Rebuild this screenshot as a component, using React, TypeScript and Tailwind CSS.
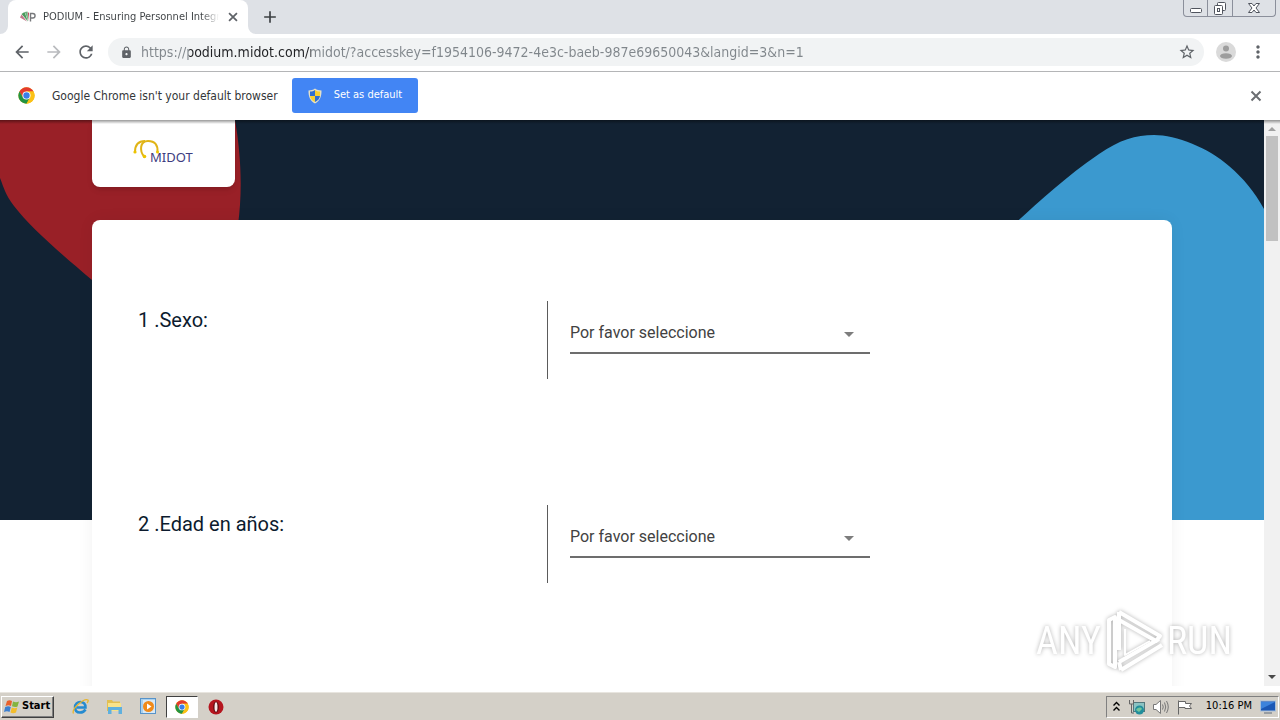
import type { ReactNode } from "react";
import {
  MdAdd,
  MdArrowBack,
  MdArrowForward,
  MdClose,
  MdLock,
  MdMoreVert,
  MdRefresh,
  MdStarBorder,
} from "react-icons/md";

type Question = { id: string; number: number; text: string };

const QUESTIONS: Question[] = [
  { id: "sexo", number: 1, text: "Sexo:" },
  { id: "edad", number: 2, text: "Edad en años:" },
];

const PAGE_URL =
  "https://podium.midot.com/midot/?accesskey=f1954106-9472-4e3c-baeb-987e69650043&langid=3&n=1";

function ChromeLogo({ size }: { size: number }) {
  return (
    <svg width={size} height={size} viewBox="0 0 48 48" aria-hidden="true">
      <circle cx="24" cy="24" r="23" fill="#fbc116" />
      <path d="M4.1 12.5A23 23 0 0 1 43.9 12.5L24 12.5L14 30Z" fill="#e33b2e" />
      <path d="M4.1 12.5A23 23 0 0 0 24 47L34 29.8L14 29.8Z" fill="#229342" />
      <path d="M43.9 12.5A23 23 0 0 1 24 47L34 29.8L24 12.5Z" fill="#fbc116" />
      <circle cx="24" cy="24" r="11.5" fill="#fff" />
      <circle cx="24" cy="24" r="9" fill="#3a7ee8" />
    </svg>
  );
}

function PodiumFavicon() {
  return (
    <svg width="16" height="16" viewBox="0 0 16 16" aria-hidden="true" className="shrink-0">
      <path d="M1.500 5L4.500 3L8 12.500Z" fill="#4a9a5c" />
      <path d="M4.800 3L7.500 2.5L8.200 12Z" fill="#6bb07c" />
      <path d="M0 8.500L1.500 5.500L7 12.500Z" fill="#c2778a" />
      <path d="M7.800 3L9 4L8.500 12Z" fill="#c0455a" />
      <path d="M10.5 12.500V4.5H12.800A2.2 2.2 0 0 1 12.800 9H10.5" fill="none" stroke="#77797c" strokeWidth="1.4" />
    </svg>
  );
}

function ShieldIcon() {
  return (
    <svg width="14" height="16" viewBox="0 0 14 16" aria-hidden="true">
      <path d="M7 0.5C9 2 11 2.4 13.5 2.4C13.7 8 12 13 7 15.5C2 13 0.3 8 0.5 2.4C3 2.4 5 2 7 0.5Z" fill="#e3e0c8" />
      <path d="M7 2C5.500 3 4 3.500 2 3.500V8H7Z" fill="#2f6fd0" />
      <path d="M7 2C8.500 3 10 3.500 12 3.500V8H7Z" fill="#f7d030" />
      <path d="M2 8H7V14C4 12.500 2.300 10.500 2 8Z" fill="#f7d030" />
      <path d="M12 8H7V14C10 12.500 11.700 10.500 12 8Z" fill="#2f6fd0" />
    </svg>
  );
}

function CrossIcon({ size }: { size: number }) {
  return (
    <svg width={size} height={size} viewBox="0 0 16 16" stroke="currentColor" strokeWidth="2" aria-hidden="true">
      <path d="M3.500 3.500L12.500 12.500M12.500 3.500L3.500 12.500" />
    </svg>
  );
}

function TabStrip() {
  return (
    <div className="flex h-[34px] shrink-0 items-stretch justify-between bg-[#dee1e6]">
      <div className="flex items-center">
        <svg width="8" height="34" aria-hidden="true">
          <path d="M0 34A8 8 0 0 0 8 26V34Z" fill="#fff" />
        </svg>
        <div className="flex h-full w-60 items-center gap-[7px] rounded-t-lg bg-white pr-2 pl-3">
          <PodiumFavicon />
          <span className="h-5 w-44 overflow-hidden bg-linear-to-r from-[#3c4043] from-90% to-transparent bg-clip-text text-[11px] leading-5 whitespace-nowrap text-transparent">
            PODIUM - Ensuring Personnel Integrity
          </span>
          <button type="button" aria-label="Close tab" className="text-[#5f6368]">
            <CrossIcon size={14} />
          </button>
        </div>
        <svg width="8" height="34" aria-hidden="true">
          <path d="M8 34A8 8 0 0 1 0 26V34Z" fill="#fff" />
        </svg>
        <button type="button" aria-label="New tab" className="ml-1 text-[#3c4043]">
          <MdAdd size={20} />
        </button>
      </div>
      <div className="mr-1 flex h-[17px] divide-x divide-[#8b8f9b] overflow-hidden rounded-b border border-t-0 border-[#8b8f9b] text-[#50545e]">
        <button type="button" aria-label="Minimize" className="flex w-6 items-center justify-center">
          <svg width="12" height="17" viewBox="0 0 12 17" fill="none" stroke="currentColor">
            <rect x="0.5" y="8.500" width="11" height="4" rx="1" fill="#fff" />
          </svg>
        </button>
        <button type="button" aria-label="Restore" className="flex w-[25px] items-center justify-center">
          <svg width="14" height="17" viewBox="0 0 14 17" fill="none" stroke="currentColor">
            <rect x="4.500" y="2.500" width="8" height="8" rx="1" fill="#fff" />
            <rect x="1.500" y="5.500" width="8" height="9" rx="1" fill="#fff" />
            <rect x="4.500" y="8.500" width="2" height="3" />
          </svg>
        </button>
        <button type="button" aria-label="Close" className="flex w-[42px] items-center justify-center">
          <svg width="12" height="17" viewBox="0 0 12 17" fill="#fff" stroke="currentColor">
            <path d="M0.500 3.500H4L6 6L8 3.500H11.500L8 8L11.500 12.500H8L6 10L4 12.500H0.500L4 8Z" />
          </svg>
        </button>
      </div>
    </div>
  );
}

function Toolbar() {
  return (
    <div className="flex h-[38px] shrink-0 items-center border-b border-[#b4b5b7] bg-white px-3 pb-px text-[#5f6368]">
      <div className="flex items-center gap-3">
        <button type="button" aria-label="Back">
          <MdArrowBack size={20} />
        </button>
        <button type="button" aria-label="Forward" className="text-[#b9bbbe]">
          <MdArrowForward size={20} />
        </button>
        <button type="button" aria-label="Reload">
          <MdRefresh size={20} />
        </button>
      </div>
      <div className="ml-3 flex h-7 min-w-0 flex-1 items-center rounded-full bg-[#f1f3f4] pr-2 pl-3">
        <MdLock size={13} className="shrink-0" />
        {/* scheme and path are grey, the host is dark */}
        <input
          type="text"
          aria-label="Address"
          defaultValue={PAGE_URL}
          className="ml-2 h-6 min-w-0 flex-1 bg-[linear-gradient(to_right,#80868b_48px,#202124_48px,#202124_170px,#80868b_170px)] bg-clip-text text-[14px] text-transparent outline-none"
        />
        <button type="button" aria-label="Bookmark this page">
          <MdStarBorder size={18} />
        </button>
      </div>
      <button type="button" aria-label="Profile" className="ml-3">
        <svg width="20" height="20" viewBox="0 0 20 20">
          <circle cx="10" cy="10" r="10" fill="#dadada" />
          <circle cx="10" cy="6.500" r="3" fill="#9d9d9d" />
          <ellipse cx="10" cy="14" rx="6" ry="2.800" fill="#9d9d9d" />
        </svg>
      </button>
      <button type="button" aria-label="Menu" className="ml-3">
        <MdMoreVert size={20} />
      </button>
    </div>
  );
}

function InfoBar() {
  return (
    <div className="flex h-12 shrink-0 items-center bg-white px-4 pb-px text-[12px]">
      <div className="flex w-5 justify-center">
        <ChromeLogo size={17} />
      </div>
      <p className="ml-4 text-[#333638]">Google Chrome isn&apos;t your default browser</p>
      <button
        type="button"
        className="ml-3.5 flex h-[35px] items-center gap-3 rounded-[3px] bg-[#4285f4] px-4 text-[11px] text-white"
      >
        <ShieldIcon />
        Set as default
      </button>
      <button type="button" aria-label="Dismiss" className="ml-auto text-[#6b6e72]">
        <CrossIcon size={16} />
      </button>
    </div>
  );
}

function HeroBackground() {
  return (
    <div className="flex h-[400px] justify-between overflow-hidden bg-[#122233] [grid-area:1/1]">
      <svg width="242" height="400" viewBox="0 0 242 400" aria-hidden="true">
        <path
          d="M0 0H235C242 40 242 75 238 105C230 150 170 190 130 190C110 190 98 165 92 160C60 133 30 107 14 86C5 74 4 68 0 58Z"
          fill="#992027"
        />
      </svg>
      <svg width="300" height="400" viewBox="0 0 300 400" aria-hidden="true">
        <path
          d="M48 106C75 82 100 58 135 34C155 20 172 15 190 15C212 15 245 28 265 46C280 59 290 71 300 89V400H120C60 300 20 160 48 106Z"
          fill="#3b99cf"
        />
      </svg>
    </div>
  );
}

function MidotLogo() {
  return (
    <svg width="62" height="28" viewBox="0 0 62 28" role="img" aria-label="Midot">
      <path d="M2 12C2 4 6 1 12 1" fill="none" stroke="#e0b416" strokeWidth="2" />
      <path d="M11.500 17C6 11 7 1 15 1C22 1 25 5 24.500 12" fill="none" stroke="#e0b416" strokeWidth="2" />
      <circle cx="2" cy="12" r="1.600" fill="#edc400" />
      <circle cx="11.500" cy="16.500" r="1.800" fill="#edc400" />
      <circle cx="24.500" cy="12" r="1.500" fill="#edc400" />
      <text x="17" y="22" fontSize="13" fontFamily="Noto Sans, sans-serif" fill="#3d3d80">
        MIDOT
      </text>
    </svg>
  );
}

function QuestionRow({ question }: { question: Question }) {
  return (
    <div className="flex">
      <label
        htmlFor={question.id}
        className="w-[455px] pt-[7px] pl-[46px] text-[20px] leading-6 text-[#0c1b2e]"
      >
        {question.number} .{question.text}
      </label>
      <div className="flex h-[78px] flex-1 items-start border-l border-[#5b5b5b] pt-3 pl-[22px]">
        <div className="grid w-[300px] items-center border-b-2 border-[#6d6d6d]">
          <select
            id={question.id}
            className="h-[39px] w-full appearance-none bg-transparent text-[16px] text-[#424242] outline-none [grid-area:1/1]"
          >
            <option>Por favor seleccione</option>
          </select>
          <svg
            width="10"
            height="5"
            viewBox="0 0 10 5"
            aria-hidden="true"
            className="pointer-events-none mt-1 mr-4 justify-self-end [grid-area:1/1]"
          >
            <path d="M0 0H10L5 5Z" fill="#7d7d7d" />
          </svg>
        </div>
      </div>
    </div>
  );
}

function Scrollbar() {
  return (
    <div className="flex w-4 shrink-0 flex-col items-center bg-[#f1f1f1]" aria-hidden="true">
      <svg width="16" height="16" viewBox="0 0 16 16">
        <path d="M4 11L8 7L12 11Z" fill="#a0a0a0" />
      </svg>
      <div className="h-[105px] w-3 bg-[#c1c1c1]" />
      <svg width="16" height="16" viewBox="0 0 16 16" className="mt-auto">
        <path d="M4 5L8 9L12 5Z" fill="#484848" />
      </svg>
    </div>
  );
}

function Watermark() {
  return (
    <div className="pointer-events-none absolute right-12 bottom-3 flex items-center font-['Liberation_Sans_Narrow','Roboto_Condensed','Liberation_Sans',sans-serif] text-[38px] leading-none text-white drop-shadow-[0_0_2px_rgba(0,0,0,0.3)]">
      <span>ANY</span>
      <svg width="66" height="66" viewBox="0 0 66 66" fill="none" stroke="#fff" strokeLinejoin="round">
        <path d="M18 4V42M18 4L59 28L55 33L18 12" strokeWidth="4" />
        <path d="M8 12V56L14 59V9Z" strokeWidth="4" />
        <path d="M18 54L58 31M20 62L61 37M18 54L20 62" strokeWidth="4" />
        <path d="M24 21V47L49 33" strokeWidth="2" />
      </svg>
      <span>RUN</span>
    </div>
  );
}

function PageView() {
  return (
    <div className="relative flex min-h-0 flex-1 bg-white font-[Roboto,sans-serif]">
      <div className="grid min-w-0 flex-1 content-start overflow-hidden">
        <HeroBackground />
        <main className="mx-auto w-full max-w-[1080px] [grid-area:1/1]">
          <div className="flex h-[67px] w-[143px] items-center justify-center rounded-b-lg bg-white shadow-md">
            <MidotLogo />
          </div>
          <form className="mt-[33px] flex flex-col gap-[126px] rounded-lg bg-white pt-[81px] pb-40 shadow-[0_0_16px_rgba(0,0,0,0.06)]">
            {QUESTIONS.map((question) => (
              <QuestionRow key={question.id} question={question} />
            ))}
          </form>
        </main>
      </div>
      <Scrollbar />
      <div className="pointer-events-none absolute inset-x-0 top-0 h-1 bg-linear-to-b from-black/40 to-transparent" />
      <Watermark />
    </div>
  );
}

function TaskButton({ label, active, children }: { label: string; active?: boolean; children: ReactNode }) {
  return (
    <button
      type="button"
      aria-label={label}
      className={
        active
          ? "flex h-[22px] w-8 items-center justify-center border border-t-[#404040] border-r-white border-b-white border-l-[#404040] bg-white"
          : "flex h-[22px] w-8 items-center justify-center"
      }
    >
      {children}
    </button>
  );
}

function Taskbar() {
  return (
    <footer className="flex h-7 shrink-0 items-center justify-between border-t border-[#e8e5df] bg-[#d4d0c8] px-px text-black">
      <div className="flex items-center gap-0.5">
        <button
          type="button"
          className="mr-2 flex h-[22px] w-[53px] items-center gap-0.5 border border-t-white border-r-[#404040] border-b-[#404040] border-l-white pl-0.5 text-[11px] font-bold shadow-[inset_-1px_-1px_0_#808080]"
        >
          <svg width="16" height="16" viewBox="0 0 16 16" aria-hidden="true" className="shrink-0">
            <path d="M3 2C5 1 6 1 8 2L7 7C5 6 4 6 1.500 7Z" fill="#e8602c" />
            <path d="M9 2.500C11 3.500 13 3.500 15 2.500L13.500 7.500C11.500 8.500 10 8 8 7.200Z" fill="#84b440" />
            <path d="M1.200 8C3.500 7 5 7 6.800 8L5.500 13C4 12 2 12 0 13Z" fill="#3b7fd0" />
            <path d="M7.800 8.500C10 9.500 11.500 9.500 13.300 8.500L12 13.500C10 14.500 8 14.300 6.500 13.500Z" fill="#f3bd2c" />
          </svg>
          Start
        </button>
        <TaskButton label="Internet Explorer">
          <svg width="17" height="17" viewBox="0 0 17 17" fill="none">
            <path
              d="M13.500 11.500C12 14 10 14.500 8 14.500C4.500 14.500 3 12 3 9.200C3 6 5.500 4 8.200 4C11.500 4 13.500 6 13.500 9.500H4.500"
              stroke="#258bd0"
              strokeWidth="2.500"
            />
            <path d="M1.500 15.500C-1 11 12 0 16 2C16.500 3 15.500 4.500 15 5" stroke="#e8b52c" strokeWidth="1.300" />
          </svg>
        </TaskButton>
        <TaskButton label="Explorer">
          <svg width="17" height="17" viewBox="0 0 17 17">
            <path d="M1 2H6L7 3.500H14V13H1Z" fill="#e2bf52" />
            <path d="M2 5H15V13H2Z" fill="#f8e38a" />
            <path d="M2 9H16V16H12.500V12H5.500V16H2Z" fill="#5fb0de" />
          </svg>
        </TaskButton>
        <TaskButton label="Media Player">
          <svg width="17" height="17" viewBox="0 0 17 17">
            <rect x="0.500" y="0.500" width="15" height="15" fill="#a9d0ee" stroke="#5793c9" />
            <rect x="3" y="2" width="12" height="13" fill="#d9e9f6" />
            <circle cx="8.500" cy="8.500" r="5.500" fill="#f18a19" />
            <path d="M7 5.500L11.500 8.500L7 11.500Z" fill="#fff" />
          </svg>
        </TaskButton>
        <TaskButton label="Google Chrome" active>
          <ChromeLogo size={14} />
        </TaskButton>
        <TaskButton label="Opera">
          <svg width="16" height="16" viewBox="0 0 16 16">
            <circle cx="8" cy="8" r="7.500" fill="#b5151f" />
            <ellipse cx="8" cy="8" rx="2.800" ry="5.500" fill="#5d0a10" />
            <ellipse cx="8" cy="8" rx="1.500" ry="4.800" fill="#f7eaea" />
          </svg>
        </TaskButton>
      </div>
      <div className="flex h-[22px] items-center border border-t-[#808080] border-r-white border-b-white border-l-[#808080] pr-0.5 pl-1.5 text-[11px]">
        <svg width="7" height="11" viewBox="0 0 7 11" fill="none" stroke="#000" strokeWidth="1.400" aria-hidden="true">
          <path d="M0.500 4.500L3.500 1.500L6.500 4.500M0.500 9.500L3.500 6.500L6.500 9.500" />
        </svg>
        <svg width="18" height="16" viewBox="0 0 18 16" className="ml-2" aria-hidden="true">
          <rect x="5.500" y="3.500" width="11" height="9" fill="#8bc3c2" stroke="#53777c" />
          <path d="M1.500 1V5H5.500V1M3.500 5V14H6" fill="none" stroke="#656565" />
          <circle cx="11.500" cy="11" r="4.500" fill="#218e9c" />
          <path d="M8 11C10 8 13 8 14 10L11 13Z" fill="#73c59b" />
        </svg>
        <svg width="18" height="16" viewBox="0 0 18 16" fill="none" stroke="#777" className="ml-1.5" aria-hidden="true">
          <path d="M1.500 5.500H4L8.500 1.500V14.500L4 10.500H1.500Z" fill="#fff" />
          <path d="M10.500 5.500Q12 8 10.500 10.500M12.500 3.500Q15 8 12.500 12.500M14.500 2Q18 8 14.500 14" />
        </svg>
        <svg width="18" height="16" viewBox="0 0 18 16" fill="#fff" stroke="#666" className="ml-1.5" aria-hidden="true">
          <path d="M2.500 15.500V1.500" />
          <path d="M2.500 2.500H9.500V4.500H15.500L13.500 7L15.500 9.500H9V8.500H2.500Z" />
        </svg>
        <time className="mr-2 ml-3">10:16 PM</time>
        <svg width="16" height="14" viewBox="0 0 16 14" aria-hidden="true">
          <rect x="0.500" y="1" width="15" height="10" fill="#1b57b5" stroke="#a7bed9" />
          <path d="M1 2H15L1 9Z" fill="#3d83dc" />
          <path d="M4 13H12" stroke="#5d6b7d" />
        </svg>
      </div>
    </footer>
  );
}

export default function App() {
  return (
    <div className="flex h-screen flex-col overflow-hidden bg-white font-['DejaVu_Sans_Condensed','Noto_Sans',sans-serif]">
      <TabStrip />
      <Toolbar />
      <InfoBar />
      <PageView />
      <div className="h-1.5 shrink-0 bg-white" />
      <Taskbar />
    </div>
  );
}
